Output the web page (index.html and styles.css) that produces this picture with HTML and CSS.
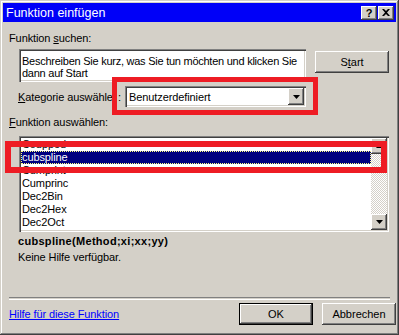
FILE: index.html
```html
<!DOCTYPE html>
<html lang="de">
<head>
    <meta charset="UTF-8">
    <title>Funktion einfügen</title>
    <link rel="stylesheet" href="styles.css">
</head>
<body>

<div class="window">
    <!-- Titelleiste -->
    <div class="titlebar">
        <span class="title">Funktion einfügen</span>
        <div class="title-buttons">
            <span class="tbtn help">?</span>
            <span class="tbtn">
                <svg width="8" height="7" viewBox="0 0 8 7"><path d="M0 0h2l2 2 2-2h2L5 3.5 8 7H6L4 5 2 7H0l3-3.5z" fill="#000"/></svg>
            </span>
        </div>
    </div>

    <div class="content">
        <div class="label first">Funktion <u>s</u>uchen:</div>
        <div class="search-row">
            <div class="textbox">Beschreiben Sie kurz, was Sie tun möchten und klicken Sie<br>dann auf Start</div>
            <button class="btn start">S<u>t</u>art</button>
        </div>

        <div class="category-row">
            <span class="cat-label"><u>K</u>ategorie auswähle</span>
            <span class="colon">:</span>
            <div class="select">
                <span class="select-value">Benutzerdefiniert</span>
                <span class="drop-btn">
                    <svg width="7" height="4" viewBox="0 0 7 4"><path d="M0 0h7L3.5 4z" fill="#000"/></svg>
                </span>
            </div>
        </div>

        <div class="label list-label"><u>F</u>unktion auswählen:</div>
        <div class="listbox">
            <div class="items">
                <div class="item">Coupped</div>
                <div class="item selected">cubspline</div>
                <div class="item">Cumprint</div>
                <div class="item">Cumprinc</div>
                <div class="item">Dec2Bin</div>
                <div class="item">Dec2Hex</div>
                <div class="item">Dec2Oct</div>
            </div>
            <div class="scrollbar">
                <span class="sbtn">
                    <svg width="7" height="4" viewBox="0 0 7 4"><path d="M0 4h7L3.5 0z" fill="#000"/></svg>
                </span>
                <span class="track"></span>
                <span class="sbtn">
                    <svg width="7" height="4" viewBox="0 0 7 4"><path d="M0 0h7L3.5 4z" fill="#000"/></svg>
                </span>
            </div>
        </div>

        <div class="signature">cubspline(Method;xi;xx;yy)</div>
        <div class="help-text">Keine Hilfe verfügbar.</div>

        <div class="separator"></div>

        <div class="footer-row">
            <a href="#" class="help-link">Hilfe für diese Funktion</a>
            <button class="btn default">OK</button>
            <button class="btn">Abbrechen</button>
        </div>
    </div>

    <!-- rote Markierungen -->
    <div class="mark mark-category"></div>
    <div class="mark mark-list"></div>
</div>

</body>
</html>
```
FILE: styles.css
```css
body {
    margin: 0;
    padding: 0;
    background-color: #d4d0c8;
    font-family: "Liberation Sans", Arial, sans-serif;
    font-size: 11px;
    letter-spacing: -0.1px;
    color: #000;
}
.window {
    position: relative;
    width: 399px;
    height: 335px;
    box-sizing: border-box;
    padding: 3px 3px 0 3px;
    background-color: #d4d0c8;
    box-shadow: inset -1px -1px #404040, inset 1px 1px #d4d0c8, inset -2px -2px #808080, inset 2px 2px #fff;
    overflow: hidden;
}
.titlebar {
    display: flex;
    align-items: center;
    justify-content: space-between;
    height: 19px;
    background-color: #0000f8;
    color: #fff;
    padding: 0 2px 0 3px;
}
.title {
    font-size: 12.5px;
    letter-spacing: 0;
}
.title-buttons {
    display: flex;
    gap: 1px;
}
.tbtn {
    display: flex;
    align-items: center;
    justify-content: center;
    width: 16px;
    height: 14px;
    background-color: #d4d0c8;
    color: #000;
    font-weight: bold;
    font-size: 11px;
    box-shadow: inset -1px -1px #404040, inset 1px 1px #fff, inset -2px -2px #808080;
}
.content {
    padding-left: 6px;
}
.label {
    line-height: 13px;
}
.label.first {
    margin-top: 10px;
}
.search-row {
    display: flex;
    align-items: flex-start;
    margin-top: 4px;
    margin-left: 10px;
}
.textbox {
    width: 287px;
    height: 33px;
    box-sizing: border-box;
    background: #fff;
    padding: 6px 0 0 3px;
    line-height: 12px;
    letter-spacing: -0.25px;
    white-space: nowrap;
    box-shadow: inset 1px 1px #808080, inset 2px 2px #404040, inset -1px -1px #fff, inset -2px -2px #d4d0c8;
}
.btn {
    font-family: "Liberation Sans", Arial, sans-serif;
    font-size: 11px;
    width: 74px;
    height: 22px;
    padding: 0;
    border: none;
    background-color: #d4d0c8;
    color: #000;
    box-shadow: inset -1px -1px #404040, inset 1px 1px #fff, inset -2px -2px #808080;
}
.btn.start {
    margin-left: 9px;
    margin-top: 2px;
}
.category-row {
    display: flex;
    align-items: center;
    margin-top: 4px;
    margin-left: 9px;
}
.cat-label {
    width: 100px;
}
.colon {
    width: 7px;
}
.select {
    display: flex;
    align-items: center;
    justify-content: space-between;
    width: 181px;
    height: 21px;
    box-sizing: border-box;
    padding: 2px;
    background: #fff;
    box-shadow: inset 1px 1px #808080, inset 2px 2px #404040, inset -1px -1px #fff, inset -2px -2px #d4d0c8;
}
.select-value {
    padding-left: 2px;
}
.drop-btn {
    display: flex;
    align-items: center;
    justify-content: center;
    width: 16px;
    height: 17px;
    background-color: #d4d0c8;
    box-shadow: inset -1px -1px #404040, inset 1px 1px #fff, inset -2px -2px #808080;
}
.list-label {
    margin-top: 9px;
}
.listbox {
    display: flex;
    width: 370px;
    height: 96px;
    box-sizing: border-box;
    margin-top: 7px;
    margin-left: 10px;
    padding: 2px;
    background: #fff;
    box-shadow: inset 1px 1px #808080, inset 2px 2px #404040, inset -1px -1px #fff, inset -2px -2px #d4d0c8;
    overflow: hidden;
}
.items {
    flex: 1;
    overflow: hidden;
}
.item {
    height: 13px;
    line-height: 13px;
    padding-left: 1px;
}
.item.selected {
    background-color: #000080;
    color: #fff;
    outline: 1px dotted #ffff80;
    outline-offset: -1px;
}
.scrollbar {
    display: flex;
    flex-direction: column;
    width: 16px;
}
.sbtn {
    display: flex;
    align-items: center;
    justify-content: center;
    height: 16px;
    background-color: #d4d0c8;
    box-shadow: inset -1px -1px #404040, inset 1px 1px #fff, inset -2px -2px #808080;
}
.track {
    flex: 1;
    background-color: #fff;
    background-image: repeating-conic-gradient(#d4d0c8 0 25%, #fff 0 50%);
    background-size: 2px 2px;
}
.signature {
    margin-top: 3px;
    margin-left: 9px;
    font-weight: bold;
    letter-spacing: 0.3px;
    line-height: 13px;
}
.help-text {
    margin-top: 3px;
    margin-left: 9px;
    line-height: 13px;
}
.separator {
    width: 381px;
    height: 1px;
    margin-top: 33px;
    border-top: 1px solid #808080;
    border-bottom: 1px solid #fff;
}
.footer-row {
    display: flex;
    align-items: center;
    margin-top: 3px;
}
.help-link {
    flex: 1;
    color: #0000ff;
}
.btn.default {
    margin-right: 9px;
    box-shadow: inset 0 0 0 1px #000, inset -2px -2px #404040, inset 2px 2px #fff, inset -3px -3px #808080;
}
.mark {
    position: absolute;
    box-sizing: border-box;
    border: 6px solid #ee1c24;
}
.mark-category {
    left: 112px;
    top: 77px;
    width: 206px;
    height: 38px;
    border-width: 5px;
}
.mark-list {
    left: 5px;
    top: 141px;
    width: 382px;
    height: 32px;
}
```
